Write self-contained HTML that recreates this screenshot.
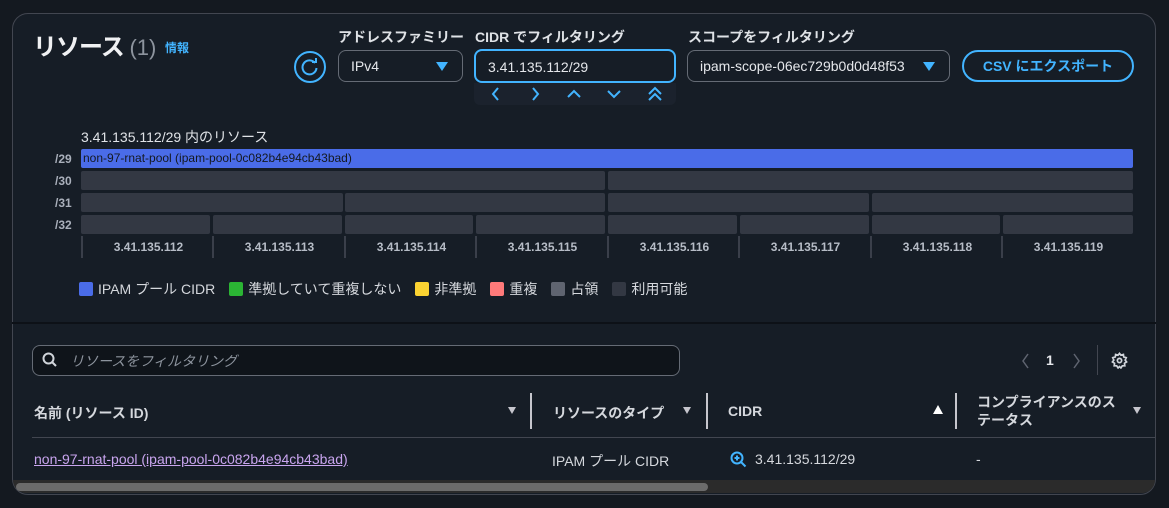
<!DOCTYPE html>
<html><head><meta charset="utf-8"><style>
*{box-sizing:border-box;margin:0;padding:0}
body{width:1169px;height:508px;background:#141920;font-family:"Liberation Sans","Noto Sans CJK JP",sans-serif;color:#d1d5db;position:relative;overflow:hidden}
.a{position:absolute;white-space:nowrap}
.panel{position:absolute;left:12px;top:13px;width:1144px;height:482px;border:1px solid #424650;border-radius:16px;background:#161d26;overflow:hidden}
.lbl{font-size:14px;color:#dfe2e6;font-weight:bold}
.sel{border:1px solid #656b75;border-radius:8px;height:32px;font-size:14px;color:#e5e7eb;padding:7px 12px}
.tri{width:0;height:0;border-left:6px solid transparent;border-right:6px solid transparent;border-top:9px solid #42b4ff;position:absolute}
.bar{position:absolute;height:19px;background:#333843;border-radius:2px}
.cl{font-size:12px;font-weight:bold;color:#aab0bb}
.ip{font-size:12px;font-weight:bold;color:#b6bcc6;text-align:center;width:131px}
.sw{display:inline-block;width:14px;height:14px;border-radius:2px;vertical-align:-2px;margin-right:5px}
.lg{font-size:14px;color:#d5d8dd;margin-right:14px}
.th{font-size:14px;font-weight:bold;color:#d5d8dd}
.vs{position:absolute;width:2px;background:#c6c6cd;top:393px;height:36px}
.dtri{width:0;height:0;border-left:4px solid transparent;border-right:4px solid transparent;border-top:7px solid #c6c6cd;position:absolute}
</style></head><body>
<div class="panel"></div>
<div class="a" style="left:12px;top:322px;width:1144px;height:2px;background:#0d1117"></div>
<div class="a" style="left:33px;top:27px;font-size:24px;font-weight:bold;color:#f0f1f3;letter-spacing:-1px">リソース <span style="color:#8d949e;font-weight:normal;font-size:22px;letter-spacing:0">(1)</span></div>
<div class="a" style="left:165px;top:39px;font-size:12px;color:#42b4ff;font-weight:bold">情報</div>
<svg class="a" style="left:293px;top:50px" width="34" height="34" viewBox="0 0 34 34"><circle cx="17" cy="17" r="15" fill="none" stroke="#42b4ff" stroke-width="2"/><path d="M22 13 A7 7 0 1 0 23.5 18" fill="none" stroke="#42b4ff" stroke-width="2"/><path d="M19 12 L23 12 L23 8" fill="none" stroke="#42b4ff" stroke-width="2"/></svg>
<div class="a lbl" style="left:338px;top:27px">アドレスファミリー</div>
<div class="a sel" style="left:338px;top:50px;width:125px">IPv4</div><div class="tri" style="left:436px;top:62px"></div>
<div class="a lbl" style="left:475px;top:27px">CIDR でフィルタリング</div>
<div class="a sel" style="left:474px;top:49px;width:202px;height:34px;border:2px solid #42b4ff;padding:8px 12px">3.41.135.112/29</div>
<div class="a" style="left:474px;top:83px;width:202px;height:22px;background:#1b222d;border-radius:0 0 6px 6px"></div>
<svg class="a" style="left:474px;top:84px" width="202" height="20" viewBox="0 0 202 20" fill="none" stroke="#42b4ff" stroke-width="2"><path d="M24 4 L19 10 L24 16"/><path d="M59 4 L64 10 L59 16"/><path d="M94 13 L100 7 L106 13"/><path d="M134 7 L140 13 L146 7"/><path d="M175 10 L181 4 L187 10 M175 16 L181 10 L187 16"/></svg>
<div class="a lbl" style="left:688px;top:27px">スコープをフィルタリング</div>
<div class="a sel" style="left:687px;top:50px;width:263px">ipam-scope-06ec729b0d0d48f53</div><div class="tri" style="left:923px;top:62px"></div>
<div class="a" style="left:962px;top:50px;width:172px;height:32px;border:2px solid #42b4ff;border-radius:16px;color:#42b4ff;font-size:14px;font-weight:bold;text-align:center;line-height:28px">CSV にエクスポート</div>

<div class="a" style="left:81px;top:127px;font-size:14px;color:#e0e3e7">3.41.135.112/29 内のリソース</div>
<div class="a cl" style="left:55px;top:152px">/29</div><div class="a cl" style="left:55px;top:174px">/30</div><div class="a cl" style="left:55px;top:196px">/31</div><div class="a cl" style="left:55px;top:218px">/32</div>
<div class="bar" style="left:81px;top:149px;width:1052px;background:#4a6ce8;font-size:12px;color:#141920;padding:2px 2px;line-height:15px">non-97-rnat-pool (ipam-pool-0c082b4e94cb43bad)</div>
<div class="bar" style="left:81px;top:171px;width:524px"></div><div class="bar" style="left:608px;top:171px;width:525px"></div>
<div class="bar" style="left:81px;top:193px;width:262px"></div><div class="bar" style="left:345px;top:193px;width:260px"></div><div class="bar" style="left:608px;top:193px;width:261px"></div><div class="bar" style="left:872px;top:193px;width:261px"></div>
<div class="bar" style="left:81px;top:215px;width:129px"></div><div class="bar" style="left:213px;top:215px;width:129px"></div><div class="bar" style="left:345px;top:215px;width:128px"></div><div class="bar" style="left:476px;top:215px;width:129px"></div><div class="bar" style="left:608px;top:215px;width:129px"></div><div class="bar" style="left:740px;top:215px;width:129px"></div><div class="bar" style="left:872px;top:215px;width:128px"></div><div class="bar" style="left:1003px;top:215px;width:130px"></div>
<div class="a" style="left:81px;top:236px;width:1052px;height:22px">
<div class="a" style="left:0;top:0;width:2px;height:22px;background:#3a3f4a"></div><div class="a" style="left:131px;top:0;width:2px;height:22px;background:#3a3f4a"></div><div class="a" style="left:263px;top:0;width:2px;height:22px;background:#3a3f4a"></div><div class="a" style="left:394px;top:0;width:2px;height:22px;background:#3a3f4a"></div><div class="a" style="left:526px;top:0;width:2px;height:22px;background:#3a3f4a"></div><div class="a" style="left:657px;top:0;width:2px;height:22px;background:#3a3f4a"></div><div class="a" style="left:789px;top:0;width:2px;height:22px;background:#3a3f4a"></div><div class="a" style="left:920px;top:0;width:2px;height:22px;background:#3a3f4a"></div>
<div class="a ip" style="left:2px;top:4px">3.41.135.112</div><div class="a ip" style="left:133px;top:4px">3.41.135.113</div><div class="a ip" style="left:265px;top:4px">3.41.135.114</div><div class="a ip" style="left:396px;top:4px">3.41.135.115</div><div class="a ip" style="left:528px;top:4px">3.41.135.116</div><div class="a ip" style="left:659px;top:4px">3.41.135.117</div><div class="a ip" style="left:791px;top:4px">3.41.135.118</div><div class="a ip" style="left:922px;top:4px">3.41.135.119</div>
</div>
<div class="a" style="left:79px;top:279px">
<span class="lg"><span class="sw" style="background:#4a6ce8"></span>IPAM プール CIDR</span><span class="lg"><span class="sw" style="background:#2bb534"></span>準拠していて重複しない</span><span class="lg"><span class="sw" style="background:#fbd332"></span>非準拠</span><span class="lg"><span class="sw" style="background:#ff7a7a"></span>重複</span><span class="lg"><span class="sw" style="background:#5f6470"></span>占領</span><span class="lg"><span class="sw" style="background:#333843"></span>利用可能</span>
</div>

<div class="a" style="left:32px;top:345px;width:648px;height:31px;border:1px solid #656b75;border-radius:8px;background:#0f141a"></div>
<svg class="a" style="left:42px;top:352px" width="16" height="16" viewBox="0 0 16 16" fill="none" stroke="#d1d5db" stroke-width="2"><circle cx="6.5" cy="6.5" r="5"/><path d="M10 10 L14 14"/></svg>
<div class="a" style="left:70px;top:351px;font-size:14px;color:#8d949e;font-style:italic">リソースをフィルタリング</div>
<svg class="a" style="left:1018px;top:352px" width="70" height="18" viewBox="0 0 70 18" fill="none" stroke="#5f6470" stroke-width="1.5"><path d="M10 2 L5 9 L10 16"/><path d="M56 2 L61 9 L56 16"/></svg>
<div class="a" style="left:1046px;top:352px;font-size:14px;font-weight:bold;color:#e5e7eb">1</div>
<div class="a" style="left:1097px;top:345px;width:1px;height:30px;background:#424650"></div>
<svg class="a" style="left:1111px;top:352px" width="17" height="17" viewBox="0 0 24 24" fill="none" stroke="#d1d5db" stroke-width="2.4"><circle cx="12" cy="12" r="3"/><path d="M12 2 L14 4.5 L17.5 3.5 L18 7 L21.5 8 L20 11.5 L22 14 L19 16 L19.5 19.5 L16 19.5 L14 22.5 L12 20.5 L10 22.5 L8 19.5 L4.5 19.5 L5 16 L2 14 L4 11.5 L2.5 8 L6 7 L6.5 3.5 L10 4.5 Z"/></svg>

<div class="a th" style="left:34px;top:403px">名前 (リソース ID)</div><div class="dtri" style="left:508px;top:407px"></div>
<div class="vs" style="left:530px"></div>
<div class="a th" style="left:553px;top:403px">リソースのタイプ</div><div class="dtri" style="left:683px;top:407px"></div>
<div class="vs" style="left:706px"></div>
<div class="a th" style="left:728px;top:403px">CIDR</div>
<div class="a" style="left:933px;top:405px;width:0;height:0;border-left:5px solid transparent;border-right:5px solid transparent;border-bottom:9px solid #fff"></div>
<div class="vs" style="left:955px"></div>
<div class="a th" style="left:977px;top:393px;line-height:18px">コンプライアンスのス<br>テータス</div><div class="dtri" style="left:1133px;top:407px"></div>
<div class="a" style="left:32px;top:437px;width:1124px;height:1px;background:#424650"></div>
<div class="a" style="left:34px;top:451px;font-size:14px;color:#c9a5ef;text-decoration:underline">non-97-rnat-pool (ipam-pool-0c082b4e94cb43bad)</div>
<div class="a" style="left:552px;top:451px;font-size:14px;color:#d5d8dd">IPAM プール CIDR</div>
<svg class="a" style="left:730px;top:451px" width="17" height="17" viewBox="0 0 17 17" fill="none" stroke="#42b4ff" stroke-width="2"><circle cx="7" cy="7" r="5.5"/><path d="M11 11 L15.5 15.5 M7 4.5 V9.5 M4.5 7 H9.5"/></svg>
<div class="a" style="left:755px;top:451px;font-size:14px;color:#d5d8dd">3.41.135.112/29</div>
<div class="a" style="left:976px;top:451px;font-size:14px;color:#d5d8dd">-</div>
<div class="a" style="left:13px;top:480px;width:1142px;height:13px;background:#2b2b2b;border-radius:0 0 15px 15px"></div>
<div class="a" style="left:16px;top:483px;width:692px;height:8px;background:#6b6b6b;border-radius:4px"></div>
</body></html>
